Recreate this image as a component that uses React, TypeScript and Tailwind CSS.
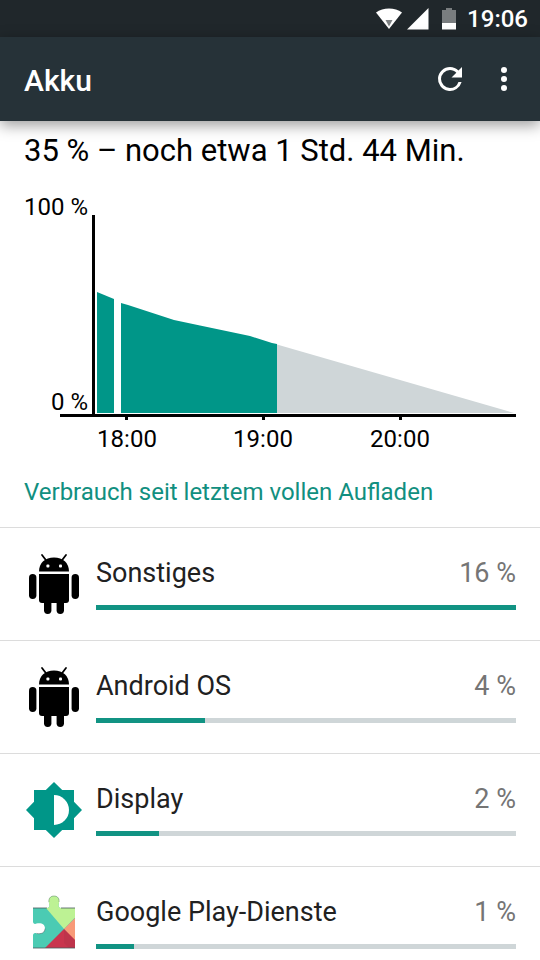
import type { ReactNode } from "react";

const AndroidIcon = () => (
  <svg viewBox="0 0 60 64" className="h-16 w-[60px]" aria-hidden="true">
    <g fill="#000">
      <path d="M15 19.5C15 11 21 5.5 30 5.5S45 11 45 19.5Z" />
      <path d="M15 22h30v26a3 3 0 0 1-3 3H18a3 3 0 0 1-3-3Z" />
      <rect x="5" y="22" width="7.4" height="25" rx="3.7" />
      <rect x="47.6" y="22" width="7.4" height="25" rx="3.7" />
      <rect x="20" y="40" width="7.4" height="22" rx="3.7" />
      <rect x="32.6" y="40" width="7.4" height="22" rx="3.7" />
    </g>
    <path d="M18 3l4.6 6M42 3l-4.6 6" stroke="#000" strokeWidth="1.8" strokeLinecap="round" />
    <rect x="22.4" y="12.4" width="3" height="3" rx="1" fill="#fff" />
    <rect x="35" y="12.4" width="3" height="3" rx="1" fill="#fff" />
  </svg>
);

const DisplayIcon = () => (
  <svg viewBox="0 0 60 64" className="h-16 w-[60px]" aria-hidden="true">
    <path
      d="M30 4l8.2 8H50v11.8l8 8.2-8 8.2V52H38.2L30 60l-8.2-8H10V40.2L2 32l8-8.2V12h11.8Z"
      fill="#009688"
    />
    <path d="M30 17a15 15 0 0 1 0 30Z" fill="#fff" />
  </svg>
);

const PlayServicesIcon = () => (
  <svg viewBox="0 0 60 64" className="h-16 w-[60px]" aria-hidden="true">
    <defs>
      <clipPath id="puzzle">
        <path d="M9 17h14c2 0 3-2 2.200-4C24 8.500 26 5 30 5s6 3.500 4.800 8c-.8 2 .2 4 2.200 4h14v40H9V44.500c0-2 1.500-2.900 3.500-2.100C17.500 43.500 21 41.500 21 37.500s-3.500-6-8.500-4.900C10.500 33.400 9 32.500 9 30.500Z" />
      </clipPath>
    </defs>
    <g clipPath="url(#puzzle)">
      <rect width="60" height="64" fill="#4bcbb3" />
      <path d="M22 17V0h38v17L40 38Z" fill="#bdf294" />
      <path d="M40 38l20-20v44Z" fill="#f89a78" />
      <path d="M40 38L14 64h52Z" fill="#c9354e" />
      <path d="M40 38L60 58 52 64 40 52Z" fill="#a93349" opacity=".35" />
    </g>
    <path d="M9 17h14M37 17h14M9 57h42" stroke="#47585a" strokeWidth=".8" fill="none" />
    <path d="M12.500 42.400C17.500 43.500 21 41.500 21 37.500" stroke="#47585a" strokeWidth=".5" fill="none" />
    <path d="M25 11C24.500 8 26 5 30 5s5.500 3 5 6" stroke="#7d9a72" strokeWidth=".6" fill="none" />
  </svg>
);

const StatusBar = () => (
  <div className="flex h-[37px] shrink-0 items-center justify-end bg-[#20272b] pr-3 text-white">
    <svg viewBox="0 0 28 22" className="h-[22px] w-7" aria-label="WLAN">
      <path d="M1 4.500C8-1 20-1 27 4.500L14 21Z" fill="#fff" />
      <path d="M10.500 12h7L14 18.500Z" fill="#7d8183" />
    </svg>
    <svg viewBox="0 0 22 22" className="ml-1 h-[22px] w-[22px]" aria-label="Mobilfunk">
      <path d="M21.500 0v21.500H0Z" fill="#fff" />
    </svg>
    <svg viewBox="0 0 16 22" className="ml-3 h-[22px] w-4" aria-label="Akku">
      <path d="M1 2h4V0h6v2h4v13H1Z" fill="#797d7f" />
      <path d="M1 15h14v6.500H1Z" fill="#fff" />
    </svg>
    <span className="ml-2.5 text-2xl/8 font-medium">19:06</span>
  </div>
);

const AppBar = () => (
  <header className="z-10 flex h-[84px] shrink-0 items-center bg-[#263238] pr-4 pl-6 text-white shadow-[0_4px_14px_rgba(0,0,0,0.4)]">
    <h1 className="flex-1 pt-1 text-[30px]/9 font-medium">Akku</h1>
    <button type="button" aria-label="Aktualisieren" className="flex h-10 w-10 items-center justify-center">
      <svg viewBox="0 0 24 24" className="h-9 w-9" fill="#fff">
        <path d="M17.650 6.350A7.958 7.958 0 0 0 12 4a8 8 0 1 0 7.730 10h-2.080A5.990 5.990 0 0 1 12 18a6 6 0 1 1 0-12c1.660 0 3.140.69 4.220 1.780L13 11h7V4Z" />
      </svg>
    </button>
    <button type="button" aria-label="Weitere Optionen" className="ml-3.5 flex h-10 w-10 items-center justify-center">
      <svg viewBox="0 0 24 24" className="h-9 w-9" fill="#fff">
        <circle cx="12" cy="6" r="2" />
        <circle cx="12" cy="12" r="2" />
        <circle cx="12" cy="18" r="2" />
      </svg>
    </button>
  </header>
);

const BatteryChart = () => (
  <svg viewBox="0 -6 492 266" className="block w-full" role="img" aria-label="Akkuverlauf">
    <path d="M73 97l17 7v114H73Z" fill="#009688" />
    <path d="M97 108l7 2 46 15 26 5.500 50 10.500 22 7 5 1v69H97Z" fill="#009688" />
    <path d="M253 149.500L490 218H253Z" fill="#cfd6d8" />
    <path d="M68 20h3v202h-3ZM36 219h456v3H36ZM101 222h3v3h-3ZM238 222h3v3h-3ZM375 222h3v3h-3Z" fill="#000" />
    <g fontSize="24" fill="#000">
      <text x="64" y="20" textAnchor="end">100 %</text>
      <text x="64" y="215" textAnchor="end">0 %</text>
      <text x="103" y="252" textAnchor="middle">18:00</text>
      <text x="239" y="252" textAnchor="middle">19:00</text>
      <text x="376" y="252" textAnchor="middle">20:00</text>
    </g>
  </svg>
);

type Usage = { name: string; percent: number; fill: number; icon: ReactNode };

const usages: Usage[] = [
  { name: "Sonstiges", percent: 16, fill: 100, icon: <AndroidIcon /> },
  { name: "Android OS", percent: 4, fill: 26, icon: <AndroidIcon /> },
  { name: "Display", percent: 2, fill: 15, icon: <DisplayIcon /> },
  { name: "Google Play-Dienste", percent: 1, fill: 9, icon: <PlayServicesIcon /> },
];

const UsageRow = ({ name, percent, fill, icon }: Usage) => (
  <li className="flex h-[113px] items-center gap-3 border-t border-[#dcdcdc] px-6">
    {icon}
    <div className="flex-1 pb-0.5">
      <div className="flex justify-between text-[27px]/8">
        <span className="text-[#212121]">{name}</span>
        <span className="text-[#757575]">{percent} %</span>
      </div>
      <div
        role="progressbar"
        aria-label={name}
        aria-valuenow={fill}
        className="mt-4 h-[5px] bg-[#cfd6d8]"
      >
        <div className="h-full bg-[#119383]" style={{ width: `${fill}%` }} />
      </div>
    </div>
  </li>
);

export default function App() {
  return (
    <div className="flex h-screen flex-col overflow-hidden bg-white font-[Roboto,sans-serif]">
      <StatusBar />
      <AppBar />
      <main className="flex-1 overflow-y-auto [scrollbar-width:none]">
        <section className="px-6 pt-3">
          <p className="text-[31px]/9 text-black">35 % – noch etwa 1 Std. 44 Min.</p>
          <div className="mt-5">
            <BatteryChart />
          </div>
        </section>
        <h2 className="px-6 pt-[21px] pb-[19px] text-2xl/8 text-[#118f80]">Verbrauch seit letztem vollen Aufladen</h2>
        <ul>
          {usages.map((usage) => (
            <UsageRow key={usage.name} {...usage} />
          ))}
        </ul>
      </main>
    </div>
  );
}
